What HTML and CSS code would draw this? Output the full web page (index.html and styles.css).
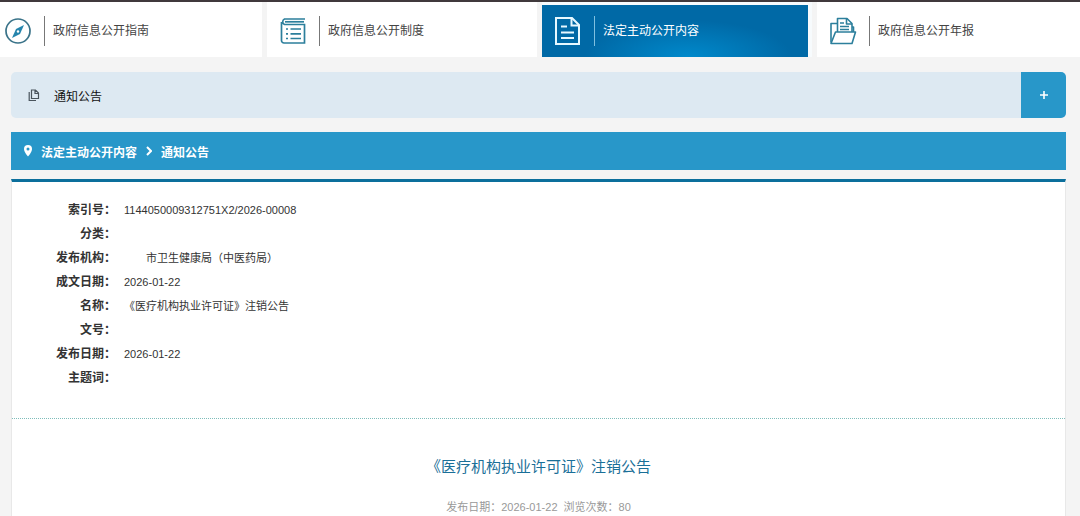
FILE: index.html
```html
<!DOCTYPE html>
<html lang="zh-CN">
<head>
    <meta charset="UTF-8">
    <meta name="viewport" content="width=device-width, initial-scale=1.0">
    <title>《医疗机构执业许可证》注销公告</title>
    <link rel="stylesheet" href="styles.css">
</head>
<body>

<!-- 顶部栏目 -->
<nav class="tabs">
    <a class="tab" href="#guide">
        <svg class="tab-icon" viewBox="0 0 28 28" fill="none" stroke="#3a7389" stroke-width="1.700">
            <circle cx="14" cy="14" r="12"/>
            <path d="M20 8l-4 9-8 4 4-9z" fill="#2585ad" stroke="none"/>
            <circle cx="14" cy="14.500" r="1.200" fill="#fff" stroke="none"/>
        </svg>
        <span class="tab-text">政府信息公开指南</span>
    </a>
    <a class="tab" href="#rules">
        <svg class="tab-icon" viewBox="0 0 28 28" fill="none" stroke="#2c7f9c" stroke-width="1.700">
            <path d="M26 2H5.500a3 3 0 0 0 0 5.500H25.500V26H5a2.500 2.500 0 0 1-2.500-2.500V5"/>
            <path d="M6 4.800h19"/>
            <path d="M11.500 12h10.500M11.500 16.800h10.500M11.500 21.500h10.500"/>
            <path d="M7 12h2M7 16.800h2M7 21.500h2"/>
        </svg>
        <span class="tab-text">政府信息公开制度</span>
    </a>
    <a class="tab active" href="#content">
        <svg class="tab-icon" viewBox="0 0 28 28" fill="none" stroke="#e6f8ff" stroke-width="2">
            <path d="M2 1h16l7 7v19H2z"/>
            <path d="M17.500 1v7.500H25"/>
            <path d="M7 9.500h6M7 15.500h13M7 21h13"/>
        </svg>
        <span class="tab-text">法定主动公开内容</span>
    </a>
    <a class="tab" href="#report">
        <svg class="tab-icon" viewBox="0 0 28 28" fill="none" stroke="#2c7f9c" stroke-width="1.600" stroke-linejoin="round">
            <path d="M2 25.500V6.500h6.500M23 10h1.500v5"/>
            <path d="M8.500 15V1.500H18l5 5V15"/>
            <path d="M17.500 1.500V7H23"/>
            <path d="M11 6h4M11 9.500h9M11 12.500h9"/>
            <path d="M6.500 15h20L23 26.500H2z"/>
        </svg>
        <span class="tab-text">政府信息公开年报</span>
    </a>
</nav>

<main class="container">
    <!-- 栏目标题 -->
    <div class="category">
        <svg class="category-icon" viewBox="0 0 12 12" fill="none" stroke="#4a545c" stroke-width="1.200">
            <path d="M3.500 1h4l3 3v5.500h-7zM7 1v3.500h3.500"/>
            <path d="M1.200 3v8.500H8"/>
        </svg>
        <h2 class="category-title">通知公告</h2>
        <button class="category-toggle" type="button" aria-label="展开">
            <svg viewBox="0 0 8 8" width="8" height="8" stroke="#fff" stroke-width="1.600">
                <path d="M4 0v8M0 4h8"/>
            </svg>
        </button>
    </div>

    <!-- 当前位置 -->
    <div class="breadcrumb">
        <svg class="pin" viewBox="0 0 8 12">
            <path d="M4 0a4 4 0 0 0-4 4c0 3 4 7.500 4 7.500S8 7 8 4a4 4 0 0 0-4-4z" fill="#fff"/>
            <circle cx="4" cy="4" r="1.500" fill="#2897c9"/>
        </svg>
        <a href="#content">法定主动公开内容</a>
        <svg class="arrow" viewBox="0 0 6 10" fill="none" stroke="#fff" stroke-width="2">
            <path d="M1 1l4 4-4 4"/>
        </svg>
        <a href="#notice">通知公告</a>
    </div>

    <article class="article">
        <dl class="info">
            <dt>索引号：</dt>
            <dd>1144050009312751X2/2026-00008</dd>
            <dt>分类：</dt>
            <dd></dd>
            <dt>发布机构：</dt>
            <dd>&#12288;&#12288;市卫生健康局（中医药局）</dd>
            <dt>成文日期：</dt>
            <dd>2026-01-22</dd>
            <dt>名称：</dt>
            <dd>《医疗机构执业许可证》注销公告</dd>
            <dt>文号：</dt>
            <dd></dd>
            <dt>发布日期：</dt>
            <dd>2026-01-22</dd>
            <dt>主题词：</dt>
            <dd></dd>
        </dl>
        <h1>《医疗机构执业许可证》注销公告</h1>
        <p class="meta"><span>发布日期：2026-01-22</span><span>浏览次数：80</span></p>
    </article>
</main>

</body>
</html>
```
FILE: styles.css
```css
* {
    box-sizing: border-box;
}
body {
    font-family: "Liberation Sans", "Noto Sans CJK SC", sans-serif;
    font-size: 12px;
    color: #333;
    background-color: #f4f4f4;
    margin: 0;
    border-top: 2px solid #40393c;
    min-height: 100vh;
    display: flex;
    flex-direction: column;
    overflow-x: hidden;
}
a {
    color: inherit;
    text-decoration: none;
}
.tabs {
    display: grid;
    grid-template-columns: repeat(4, 1fr);
    gap: 5px;
    margin: 0 -7px 0 -8px;
}
.tab {
    display: flex;
    align-items: center;
    height: 55px;
    padding: 2px 12px 0;
    color: #444;
    background-color: #fff;
}
.tab.active {
    color: #fff;
    background: radial-gradient(ellipse at 55% 100%, #0089cb, #0069a6 50%);
    border: 0 solid #f7fbfd;
    border-width: 3px 4px 0 0;
    padding-top: 0;
}
.tab-icon {
    width: 28px;
    height: 28px;
    flex: none;
}
.tab-text {
    border-left: 1px solid #777;
    margin-left: 12px;
    padding-left: 8px;
    line-height: 30px;
    white-space: nowrap;
}
.tab.active .tab-text {
    border-color: #7fc0e0;
}
.container {
    flex: 1;
    display: flex;
    flex-direction: column;
    margin: 15px 14px 0 11px;
}
.category {
    display: flex;
    align-items: center;
    height: 46px;
    padding-left: 17px;
    border-radius: 5px;
    background-color: #dde9f2;
    overflow: hidden;
}
.category-icon {
    width: 12px;
    height: 12px;
}
.category-title {
    flex: 1;
    margin: 0 0 0 14px;
    font-size: 12px;
    font-weight: normal;
    color: #111;
}
.category-toggle {
    display: flex;
    align-items: center;
    justify-content: center;
    width: 45px;
    height: 100%;
    padding: 0;
    border: none;
    background-color: #2897c9;
    cursor: pointer;
}
.breadcrumb {
    display: flex;
    align-items: center;
    gap: 9px;
    height: 38px;
    margin-top: 14px;
    padding-left: 13px;
    font-weight: bold;
    color: #fff;
    background-color: #2897c9;
}
.pin {
    width: 8px;
    height: 12px;
}
.arrow {
    width: 6px;
    height: 10px;
}
.article {
    flex: 1;
    margin-top: 9px;
    border: 1px solid #e8e8e8;
    border-top: 3px solid #0c6f9c;
    border-bottom: none;
    background-color: #fff;
}
.info {
    display: grid;
    grid-template-columns: 104px 1fr;
    grid-auto-rows: 24px;
    column-gap: 8px;
    margin: 0;
    padding: 16px 0 28px;
    line-height: 24px;
    border-bottom: 1px dotted #7fbdba;
}
.info dt {
    font-weight: bold;
    text-align: right;
}
.info dd {
    margin: 0;
    font-size: 11px;
}
h1 {
    margin: 38px 0 0;
    font-size: 15px;
    font-weight: normal;
    line-height: 20px;
    text-align: center;
    color: #1a6f98;
}
.meta {
    display: flex;
    justify-content: center;
    gap: 6px;
    margin: 22px 0 0;
    font-size: 11px;
    line-height: 16px;
    color: #999;
}
```
